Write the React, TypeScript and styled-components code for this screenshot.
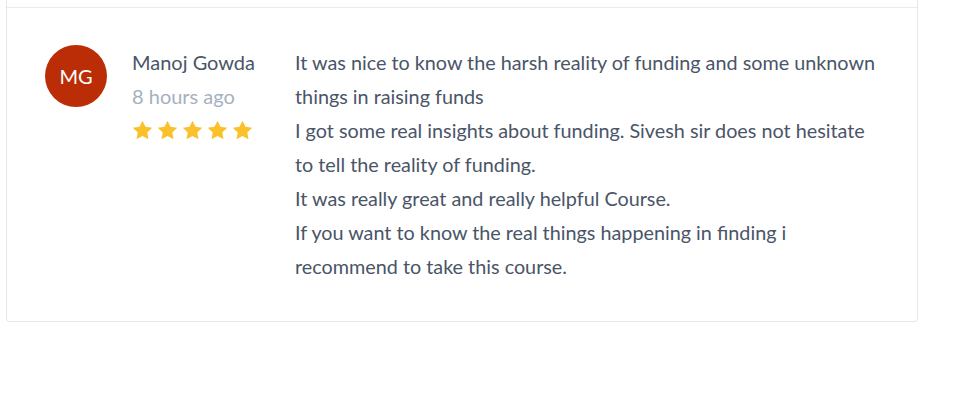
import React from "react";
import styled, { createGlobalStyle } from "styled-components";

const Global = createGlobalStyle`
  html, body { margin: 0; padding: 0; background: #ffffff; }
  body { font-family: Lato, "Noto Sans", sans-serif; -webkit-font-smoothing: antialiased; }
`;

const Page = styled.div`
  width: 960px;
  height: 406px;
  overflow: hidden;
  padding-left: 6px;
  box-sizing: border-box;
`;

const Card = styled.div`
  width: 912px;
  box-sizing: border-box;
  border: 1px solid #e3e8ec;
  border-top: none;
  border-radius: 0 0 4px 4px;
  background: #fff;
`;

const PrevTail = styled.div`
  height: 7px;
`;

const Review = styled.div`
  display: flex;
  align-items: flex-start;
  border-top: 1px solid #e9ebee;
  padding: 37px 38px 38px 38px;
`;

const Avatar = styled.div`
  flex: none;
  width: 62px;
  height: 62px;
  border-radius: 50%;
  background: #bb2d06;
  color: #fff;
  font-size: 20px;
  display: flex;
  align-items: center;
  justify-content: center;
`;

const Meta = styled.div`
  flex: none;
  width: 163px;
  margin-left: 25px;
  display: flex;
  flex-direction: column;
  font-size: 20px;
  line-height: 34px;
`;

const Name = styled.div`
  color: #4a5568;
`;

const Time = styled.div`
  color: #a6b0bf;
`;

const Stars = styled.div`
  display: flex;
  gap: 4px;
  height: 34px;
  align-items: center;
`;

const Body = styled.div`
  width: 590px;
  font-size: 19.8px;
  line-height: 34px;
  color: #4a5568;
`;

const Star = () => (
  <svg width="21" height="20" viewBox="0 0 24 23">
    <path
      d="M12 0.8l3.4 7.1 7.8 1-5.7 5.4 1.4 7.7L12 18.3l-6.9 3.7 1.4-7.7L0.8 8.9l7.8-1z"
      fill="#fbc12b"
    />
  </svg>
);

export default function App() {
  return (
    <>
      <Global />
      <Page>
        <Card>
          <PrevTail />
          <Review>
            <Avatar>MG</Avatar>
            <Meta>
              <Name>Manoj Gowda</Name>
              <Time>8 hours ago</Time>
              <Stars>
                {[0, 1, 2, 3, 4].map((i) => (
                  <Star key={i} />
                ))}
              </Stars>
            </Meta>
            <Body>
              It was nice to know the harsh reality of funding and some unknown
              things in raising funds
              <br />
              I got some real insights about funding. Sivesh sir does not hesitate
              to tell the reality of funding.
              <br />
              It was really great and really helpful Course.
              <br />
              If you want to know the real things happening in finding i
              recommend to take this course.
            </Body>
          </Review>
        </Card>
      </Page>
    </>
  );
}
